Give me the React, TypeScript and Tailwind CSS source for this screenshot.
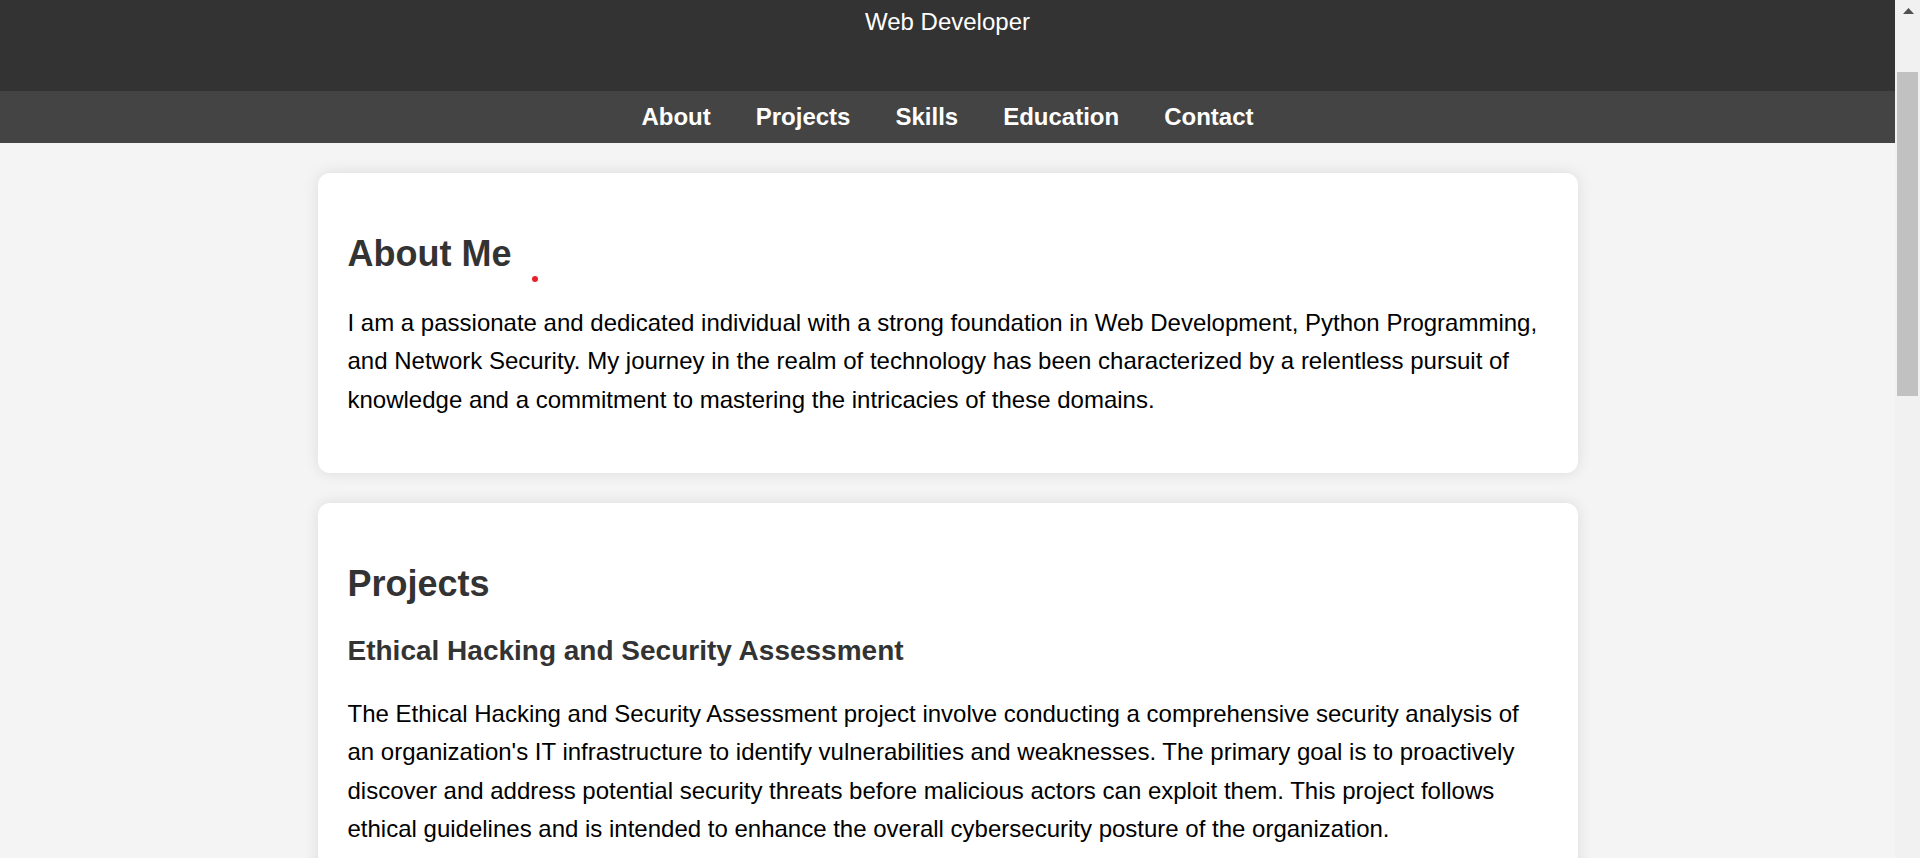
import React from 'react';

const projects = [
  {
    title: 'Ethical Hacking and Security Assessment',
    text: "The Ethical Hacking and Security Assessment project involve conducting a comprehensive security analysis of an organization's IT infrastructure to identify vulnerabilities and weaknesses. The primary goal is to proactively discover and address potential security threats before malicious actors can exploit them. This project follows ethical guidelines and is intended to enhance the overall cybersecurity posture of the organization.",
  },
  {
    title: 'Personal Portfolio Website',
    text: 'A responsive portfolio website built with HTML, CSS and JavaScript to present my projects, skills and contact details in a clean and accessible layout.',
  },
];

function Card({ title, children, dot }: { title: string; children: React.ReactNode; dot?: boolean }) {
  return (
    <section className="relative bg-white rounded-xl p-[30px] shadow-[0_0_15px_rgba(0,0,0,0.1)]">
      <h2 className="text-[36px] leading-[41.4px] font-bold text-[#333] my-[30px]">{title}</h2>
      {children}
      {dot && <span className="absolute left-[214px] top-[103px] w-[6px] h-[6px] rounded-full bg-[#e8202a]" />}
    </section>
  );
}

// classic window scrollbar, drawn since the headless page has none
function ScrollBar() {
  return (
    <div className="w-[25px] shrink-0 bg-[#f1f1f1] flex flex-col items-center">
      <svg width="11" height="6" viewBox="0 0 11 6" className="mt-[8px] ml-[1px]">
        <polygon points="5.5,0 11,6 0,6" fill="#505050" />
      </svg>
      <div className="mt-[58px] w-[21px] h-[324px] bg-[#c1c1c1]" />
    </div>
  );
}

export default function App() {
  return (
    <div className="flex h-screen overflow-hidden bg-[#f4f4f4] text-black text-[24px] leading-[38.4px] [font-family:'Liberation_Sans',Arial,sans-serif]">
      <div className="flex-1 min-w-0 overflow-y-auto [scrollbar-width:none]">
        <header className="bg-[#333] text-white text-center h-[91px] pt-[3px]">
          <p>Web Developer</p>
        </header>

        <nav className="bg-[#444] py-3 flex justify-center gap-[45px]">
          {['About', 'Projects', 'Skills', 'Education', 'Contact'].map((item) => (
            <a key={item} href={'#' + item.toLowerCase()} className="text-white font-bold leading-[27.6px]">
              {item}
            </a>
          ))}
        </nav>

        <main className="w-[1260px] mx-auto pt-[30px] pb-[30px] flex flex-col gap-[30px]">
          <Card title="About Me" dot>
            <p className="my-6">
              I am a passionate and dedicated individual with a strong foundation in Web Development, Python Programming, and Network Security. My journey in the realm of technology has been characterized by a relentless pursuit of knowledge and a commitment to mastering the intricacies of these domains.
            </p>
          </Card>

          <Card title="Projects">
            {projects.map((p) => (
              <div key={p.title}>
                <h3 className="text-[28px] leading-[32.2px] font-bold text-[#333] my-7">{p.title}</h3>
                <p className="my-6">{p.text}</p>
              </div>
            ))}
          </Card>

          <Card title="Skills">
            <ul className="list-disc pl-10 my-6">
              <li>Web Development (HTML, CSS, JavaScript)</li>
              <li>Python Programming</li>
              <li>Network Security</li>
            </ul>
          </Card>

          <Card title="Education">
            <p className="my-6">Bachelor's degree in Computer Science</p>
          </Card>

          <Card title="Contact">
            <p className="my-6">Email: contact@example.com</p>
          </Card>
        </main>
      </div>
      <ScrollBar />
    </div>
  );
}
